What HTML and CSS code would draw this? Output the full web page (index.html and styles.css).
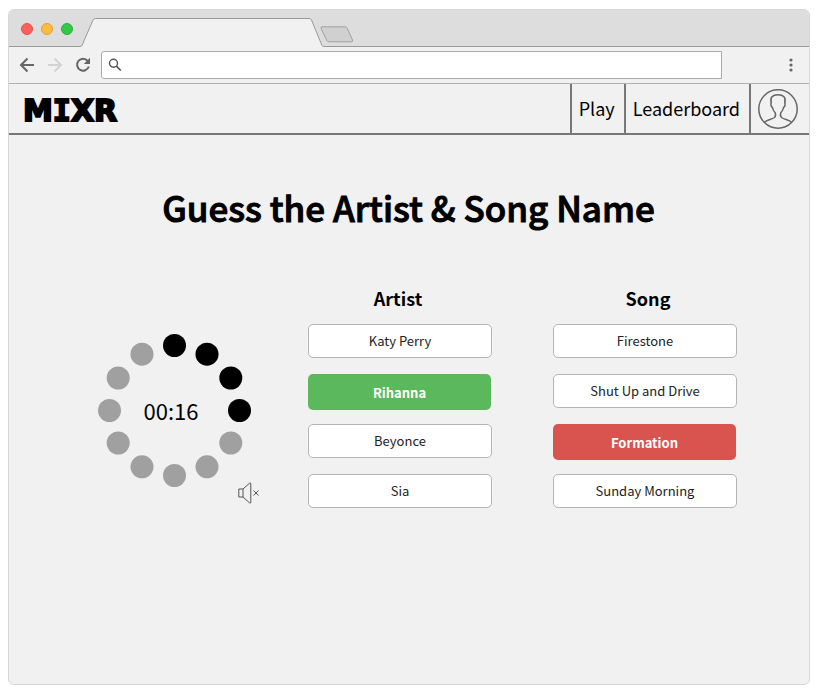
FILE: index.html
```html
<!DOCTYPE html>
<html lang="en">
<head>
<meta charset="utf-8">
<title>MIXR</title>
<link rel="stylesheet" href="styles.css">
</head>
<body>
<div class="window">
  <div class="tabstrip">
    <div class="lights"><span class="light close"></span><span class="light minimise"></span><span class="light zoom"></span></div>
    <svg class="tab" width="244" height="29" viewBox="0 0 244 29" aria-hidden="true">
      <path d="M0 29V28.500Q1.500 28.500 2 27.500L13 2Q14 .5 15.500 .5H229Q230.500 .5 231.500 2L242 27.500Q242.500 28.500 244 28.500V29Z" fill="#f1f1f1"/>
      <path d="M0 28.500Q1.500 28.500 2 27.500L13 2Q14 .5 15.500 .5H229Q230.500 .5 231.500 2L242 27.500Q242.500 28.500 244 28.500" fill="none" stroke="#999"/>
    </svg>
    <svg class="new-tab" width="34" height="17" viewBox="0 0 34 17" aria-hidden="true">
      <path d="M2 .8H25Q26.500 .8 27.200 2.200L32.500 14Q33 15.800 31.500 15.800H9Q7.500 15.800 6.800 14.500L1 2.500Q.5 .8 2 .8Z" fill="#d0d0d0" stroke="#a0a0a0"/>
    </svg>
  </div>
  <div class="toolbar">
    <button class="tool" aria-label="Back"><svg width="16" height="16" viewBox="0 0 16 16"><path d="M15 8H2M8.500 1.500L2 8l6.500 6.500" class="thick"/></svg></button>
    <button class="tool faded" aria-label="Forward"><svg width="16" height="16" viewBox="0 0 16 16"><path d="M1 8h13M7.500 1.500L14 8l-6.500 6.500" class="thick"/></svg></button>
    <button class="tool" aria-label="Reload"><svg width="16" height="16" viewBox="0 0 16 16"><path d="M12.700 3.800A6 6 0 1 0 13.800 9.500" class="thick"/><path d="M15 .8V7H8.800Z" fill="currentColor"/></svg></button>
    <div class="address">
      <svg width="14" height="14" viewBox="0 0 14 14" aria-hidden="true"><circle cx="5.500" cy="5.200" r="4" fill="none" stroke="#555" stroke-width="1.400"/><path d="M8.400 8.100L12.800 12.500" stroke="#555" stroke-width="1.700"/></svg>
      <input type="text" aria-label="Address">
    </div>
    <button class="tool more" aria-label="Menu"><svg width="4" height="14" viewBox="0 0 4 14"><g fill="currentColor"><circle cx="2" cy="2" r="1.600"/><circle cx="2" cy="7" r="1.600"/><circle cx="2" cy="12" r="1.600"/></g></svg></button>
  </div>
  <header class="header">
    <a class="logo" href="#">M<span class="slab">I</span>XR</a>
    <nav class="nav">
      <a href="#">Play</a>
      <a href="#">Leaderboard</a>
      <a href="#" aria-label="Profile">
        <svg width="40" height="40" viewBox="0 0 40 40" fill="none" stroke="#666" stroke-width="1.500"><circle cx="20" cy="20" r="19.200"/><path d="M6.500 33.300C9 31 13.500 30.500 16.500 28.500C18 27.300 17.600 25 17.200 23.700C15.500 22.500 15 20.500 14.400 18.500C12.800 17.500 12.600 15 13.200 13.800C11.800 8.500 14.500 5.800 20 5.800S28.200 8.500 26.800 13.800C27.400 15 27.200 17.500 25.600 18.500C25 20.500 24.500 22.500 22.800 23.700C22.400 25 22 27.300 23.500 28.500C26.500 30.500 31 31 33.500 33.300"/></svg>
      </a>
    </nav>
  </header>
  <main class="main">
    <h1>Guess the Artist &amp; Song Name</h1>
    <div class="game">
      <section class="timer" aria-label="Time left">
        <svg class="ring" width="153" height="153" viewBox="-76.500 -76.500 153 153" aria-hidden="true">
          <g fill="#a0a0a0">
            <circle cx="56.300" cy="32.500" r="11.500"/><circle cx="32.500" cy="56.300" r="11.500"/><circle cx="0" cy="65" r="11.500"/><circle cx="-32.500" cy="56.300" r="11.500"/><circle cx="-56.300" cy="32.500" r="11.500"/><circle cx="-65" cy="0" r="11.500"/><circle cx="-56.300" cy="-32.500" r="11.500"/><circle cx="-32.500" cy="-56.300" r="11.500"/>
          </g>
          <g fill="#000">
            <circle cx="0" cy="-65" r="11.500"/><circle cx="32.500" cy="-56.300" r="11.500"/><circle cx="56.300" cy="-32.500" r="11.500"/><circle cx="65" cy="0" r="11.500"/>
          </g>
        </svg>
        <time class="time">00:16</time>
        <button class="mute" aria-label="Mute"><svg width="22" height="22" viewBox="0 0 22 22" fill="none" stroke="#555"><path d="M.8 7H5V15H.8ZM5 7L11.500 1.200Q12.800 .4 12.800 1.800V20.200Q12.800 21.600 11.500 20.800L5 15M15.500 8.500l5 5M20.500 8.500l-5 5"/></svg></button>
      </section>
      <div class="choices">
        <section class="choice">
          <h2>Artist</h2>
          <button class="option">Katy Perry</button>
          <button class="option right">Rihanna</button>
          <button class="option">Beyonce</button>
          <button class="option">Sia</button>
        </section>
        <section class="choice">
          <h2 class="song-title">Song</h2>
          <button class="option">Firestone</button>
          <button class="option">Shut Up and Drive</button>
          <button class="option wrong">Formation</button>
          <button class="option">Sunday Morning</button>
        </section>
      </div>
    </div>
  </main>
</div>
</body>
</html>
```
FILE: styles.css
```css
* { box-sizing: border-box; }
body {
  margin: 0;
  padding: 9px 12px 12px 8px;
  min-height: 100vh;
  display: flex;
  background: #fff;
  color: #000;
  font-family: "Noto Sans CJK SC", "Noto Sans", sans-serif;
}
button { font: inherit; color: inherit; border: 0; background: none; padding: 0; }
a { color: inherit; text-decoration: none; }
svg { display: block; flex: none; }

.window {
  flex: 1;
  display: flex;
  flex-direction: column;
  background: #f1f1f1;
  border: 1px solid #d6d6d6;
  border-radius: 6px;
  overflow: hidden;
}
.tabstrip {
  display: flex;
  align-items: flex-end;
  height: 37px;
  background: #ddd;
  border-bottom: 1px solid #999;
}
.lights { display: flex; gap: 8px; width: 71px; padding: 2px 0 0 12px; align-self: center; }
.light { width: 12px; height: 12px; border-radius: 50%; border: 1px solid; }
.close { background: #fc605c; border-color: #e2504d; }
.minimise { background: #fdbc40; border-color: #dfa034; }
.zoom { background: #34c84a; border-color: #2aae3a; }
.tab { margin-bottom: -1px; }
.new-tab { margin-left: -4px; margin-bottom: 3px; }

.toolbar {
  display: flex;
  align-items: center;
  gap: 12px;
  height: 37px;
  padding: 0 16px 0 10px;
  border-bottom: 1px solid #b0b0b0;
}
.tool { color: #666; }
.faded { color: #d3d3d3; }
.thick { fill: none; stroke: currentColor; stroke-width: 2; }
.address {
  flex: 1;
  display: flex;
  align-items: center;
  gap: 6px;
  height: 28px;
  margin-left: -2px;
  padding-left: 6px;
  background: #fff;
  border: 1px solid #aaa;
  border-radius: 3px 0 0 3px;
}
.address input { flex: 1; min-width: 0; border: 0; outline: 0; background: none; }
.more { margin-left: 55px; }

.header {
  display: flex;
  justify-content: space-between;
  height: 51px;
  border-bottom: 2px solid #777;
}
.logo {
  padding-left: 14px;
  font: 700 30px/54px "DejaVu Sans", sans-serif;
  -webkit-text-stroke: 2px #000;
}
.slab { font-family: "DejaVu Sans Mono", monospace; }
.nav { display: flex; }
.nav a {
  display: flex;
  align-items: center;
  padding: 0 9px 2px 7px;
  border-left: 2px solid #777;
  font-size: 18px;
}
.nav a:last-child { padding: 0 11px 0 7px; }

.main { flex: 1; padding: 45px 72px 0 89px; }
h1 {
  margin: 0 18px 51px 0;
  text-align: center;
  font-size: 35px;
  font-weight: 500;
  line-height: 54px;
  -webkit-text-stroke: 1px #000;
}
.game { display: grid; grid-template-columns: 162fr 429fr; gap: 48px; }
.timer {
  display: grid;
  grid-template-columns: 162px;
  justify-content: center;
  align-content: start;
  padding-top: 49px;
}
.ring, .time { grid-area: 1 / 1; }
.time { align-self: center; padding: 0 16px 2px 0; text-align: center; font-size: 22px; }
.mute { justify-self: end; margin-top: -5px; color: #555; }
.choices { display: grid; grid-template-columns: 1fr 1fr; gap: 61px; }
.choice {
  display: grid;
  grid-template-rows: 39px;
  grid-auto-rows: 50px;
  align-items: start;
}
h2 {
  margin: 0;
  padding-right: 4px;
  text-align: center;
  font-size: 18px;
  font-weight: 700;
  line-height: 26px;
}
.song-title { padding: 0 0 0 6px; }
.option {
  height: 34px;
  padding-bottom: 2px;
  background: #fff;
  border: 1px solid #b5b5b5;
  border-radius: 5px;
  color: #222;
  font-size: 13px;
}
.right, .wrong {
  height: 36px;
  margin-right: 1px;
  padding: 0;
  border: 0;
  color: #fff;
  font-weight: 700;
}
.right { background: #5cb85c; }
.wrong { background: #d9534f; }
```
